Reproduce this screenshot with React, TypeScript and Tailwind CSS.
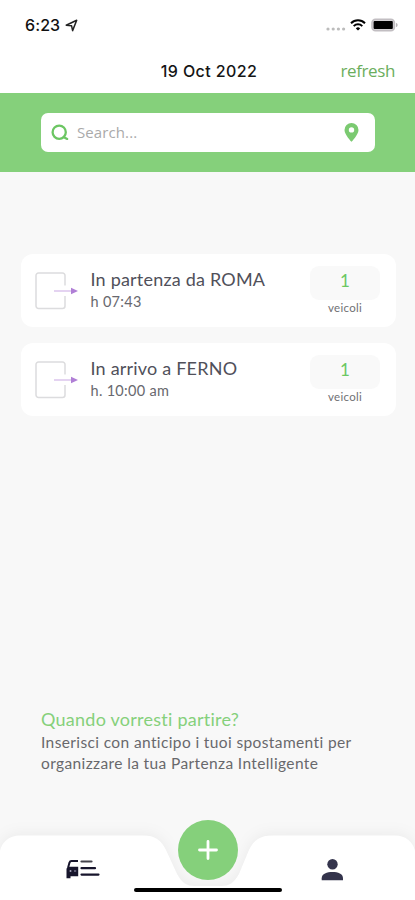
import { useState } from 'react';

interface Trip {
  id: number;
  title: string;
  time: string;
  vehicles: number;
}

const trips: Trip[] = [
  { id: 1, title: 'In partenza da ROMA', time: 'h 07:43', vehicles: 1 },
  { id: 2, title: 'In arrivo a FERNO', time: 'h. 10:00 am', vehicles: 1 },
];

function StatusBar() {
  return (
    <div className="flex h-[50px] items-center justify-between pl-[25px] pr-[17px]">
      <div className="flex items-center gap-[5px] font-['Inter',sans-serif] text-[16px] font-medium text-[#111]">
        <span className="tracking-[0.1px]">6:23</span>
        <svg className="h-[13px] w-[13px]" viewBox="0 0 13 13" fill="none" stroke="#222" strokeWidth="1.5" strokeLinejoin="round">
          <path d="M1.2 6.2 11.7 1.2 7.6 11.6 6.6 6.8Z" />
        </svg>
      </div>
      <div className="flex items-center">
        <svg className="mt-[8px] mr-[4px] h-[4px] w-[20px]" viewBox="0 0 20 4" fill="#bcbcbc">
          <circle cx="2" cy="2" r="1.6" />
          <circle cx="7.2" cy="2" r="1.6" />
          <circle cx="12.4" cy="2" r="1.6" />
          <circle cx="17.6" cy="2" r="1.6" />
        </svg>
        <svg className="mr-[5px] h-[12px] w-[16px]" viewBox="0 0 16 12" fill="none" stroke="#000" strokeWidth="2">
          <path d="M1 4.2a10 10 0 0 1 14 0" />
          <path d="M3.7 7.1a6.2 6.2 0 0 1 8.6 0" />
          <path d="M8 11.6 5.8 9.4a3.2 3.2 0 0 1 4.4 0Z" fill="#000" stroke="none" />
        </svg>
        <svg className="h-[14px] w-[27px]" viewBox="0 0 27 14">
          <rect x="1" y="1.2" width="22.4" height="11.6" rx="3.5" fill="#d5d2d5" stroke="#c2bec2" strokeWidth="1.6" />
          <rect x="2.6" y="3" width="19.2" height="8" rx="1" fill="#000" />
          <path d="M25 5v4c1.2-.4 1.6-1.1 1.6-2S26.2 5.4 25 5Z" fill="#b9b5b9" />
        </svg>
      </div>
    </div>
  );
}

function TripIcon() {
  return (
    <svg className="h-[38px] w-[44px] shrink-0" viewBox="0 0 44 38" fill="none">
      <path
        d="M30 13.5V3.5A2.5 2.5 0 0 0 27.5 1h-24A2.5 2.5 0 0 0 1 3.5V34a2.5 2.5 0 0 0 2.5 2.5h24A2.5 2.5 0 0 0 30 34V24"
        stroke="#dcdcde"
        strokeWidth="1.5"
      />
      <path d="M19 19h17" stroke="#d9c0eb" strokeWidth="1.4" />
      <path d="M36 15.8 43 19l-7 3.2Z" fill="#b07fd6" />
    </svg>
  );
}

function TripCard({ trip }: { trip: Trip }) {
  return (
    <div className="flex h-[73px] rounded-[12px] bg-white pl-[14px] pr-[16px]">
      <div className="flex items-center">
        <TripIcon />
      </div>
      <div className="ml-[11.5px] flex-1 pt-[13px]">
        <div className="whitespace-nowrap text-[18px] leading-[24px] tracking-[0.2px] text-[#50505a]">{trip.title}</div>
        <div className="text-[14.5px] leading-[21px] tracking-[0.3px] text-[#68686e]">{trip.time}</div>
      </div>
      <div className="flex w-[70px] flex-col items-center pt-[12px]">
        <div className="flex h-[34px] w-full items-center justify-center rounded-[9px] bg-[#f9f9f9] pb-[4px] text-[17px] text-[#6bc762]">
          {trip.vehicles}
        </div>
        <div className="text-[11.5px] leading-[15px] tracking-[0.3px] text-[#707074]">veicoli</div>
      </div>
    </div>
  );
}

function BottomBar() {
  return (
    <div className="relative h-[80px]">
      <svg className="absolute inset-0 h-full w-full overflow-visible" viewBox="0 0 415 80">
        <path
          d="M0 80V31C2 22 9 15.5 20 15.5H143C155 15.5 161 20 166 30L177 54C182 63 187 66 194 66H222C229 66 234 63 239 54L249 30C254 20 260 15.5 273 15.5H395C406 15.5 413 22 415 31V80Z"
          fill="#fff"
          filter="drop-shadow(0 -2px 7px rgba(0,0,0,0.05))"
        />
      </svg>
      <button className="absolute left-[178px] top-0 flex h-[60px] w-[60px] items-center justify-center rounded-full bg-[#85d07b]">
        <svg className="h-[20px] w-[20px]" viewBox="0 0 20 20" stroke="#fff" strokeWidth="2.8" strokeLinecap="round">
          <path d="M10 1.5v17M1.5 10h17" />
        </svg>
      </button>
      <div className="relative flex justify-between pl-[65px] pr-[71px] pt-[38px]">
        <svg className="h-[22px] w-[35px]" viewBox="0 0 35 22" fill="none" stroke="#17152c" strokeWidth="2.2">
          <path d="M3 10 4.5 4.6Q5 3 6.5 3H13" strokeWidth="2" />
          <path d="M1.5 10.5 4 8.8h9.200v9.4H5.5v2h-4Z" fill="#17152c" stroke="none" />
          <circle cx="5.5" cy="13" r="1" fill="#aaa8bd" stroke="none" />
          <path d="M9 13h2.2" stroke="#77758f" strokeWidth="1.4" />
          <path d="M16.500 3.5h10" stroke="#45444d" strokeLinecap="round" />
          <path d="M16.500 10.2H30M16.500 16.6h17" strokeLinecap="round" />
        </svg>
        <svg className="h-[24px] w-[24px]" viewBox="0 0 24 24" fill="#34344c">
          <circle cx="12.5" cy="6.300" r="5.2" />
          <path d="M1.7 22.300v-2C1.7 15.6 7 14 12.5 14S23 15.6 23 20.300v2Z" />
        </svg>
      </div>
      <div className="absolute bottom-[8px] left-[134px] h-[4px] w-[148px] rounded-full bg-black" />
    </div>
  );
}

export default function App() {
  const [query, setQuery] = useState('');

  return (
    <div className="flex h-[900px] w-[415px] flex-col overflow-hidden bg-[#f8f8f8] font-['Lato',sans-serif]">
      <header className="h-[93px] bg-white">
        <StatusBar />
        <div className="grid grid-cols-[1fr_auto_1fr] items-center pl-[3px] pt-[8px]">
          <div />
          <h1 className="font-['Inter',sans-serif] text-[16px] font-medium leading-[26px] tracking-[0.4px] text-[#151515]">
            19 Oct 2022
          </h1>
          <button className="mr-[20px] justify-self-end font-['Open_Sans',sans-serif] text-[17px] leading-[26px] tracking-[-0.4px] text-[#6bae5d]">
            refresh
          </button>
        </div>
      </header>

      <div className="h-[79px] bg-[#85d07b] px-[41px] pt-[20px]">
        <div className="flex h-[39px] w-[334px] items-center rounded-[7px] bg-white pl-[10px] pr-[16px]">
          <svg className="h-[18px] w-[18px]" viewBox="0 0 18 18" fill="none" stroke="#6cc663" strokeWidth="2.3" strokeLinecap="round">
            <circle cx="8.2" cy="8.2" r="6.6" />
            <path d="M12.9 13.2 16.2 14.900" />
          </svg>
          <input
            type="text"
            value={query}
            onChange={(e) => setQuery(e.target.value)}
            placeholder="Search..."
            className="ml-[8px] min-w-0 flex-1 font-['Open_Sans',sans-serif] text-[15px] tracking-[0.1px] outline-none placeholder:text-[#aaaaaa]"
          />
          <svg className="h-[19px] w-[15px]" viewBox="0 0 15 19">
            <path
              d="M7.5 0A7 7 0 0 0 .5 7c0 4.8 7 11.8 7 11.8s7-7 7-11.8a7 7 0 0 0-7-7Zm0 9.6a2.7 2.7 0 1 1 0-5.4 2.7 2.7 0 0 1 0 5.4Z"
              fill="#7bca71"
            />
          </svg>
        </div>
      </div>

      <main className="flex flex-1 flex-col pt-[82px]">
        <div className="flex flex-col gap-[16px] pl-[21px] pr-[19px]">
          {trips.map((trip) => (
            <TripCard key={trip.id} trip={trip} />
          ))}
        </div>
        <div className="mt-auto mb-[46px] pl-[41px]">
          <h2 className="text-[18px] leading-[25px] tracking-[0.25px] text-[#85d07b]">Quando vorresti partire?</h2>
          <p className="whitespace-nowrap text-[15.5px] leading-[21px] tracking-[0.38px] text-[#68686c]">
            Inserisci con anticipo i tuoi spostamenti per
            <br />
            organizzare la tua Partenza Intelligente
          </p>
        </div>
      </main>

      <BottomBar />
    </div>
  );
}
